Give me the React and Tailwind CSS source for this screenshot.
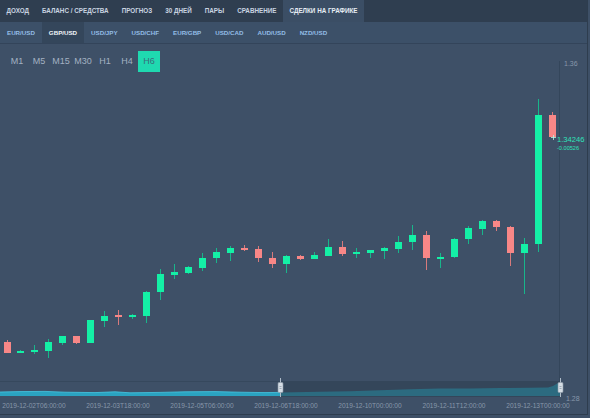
import React from "react";

const tabs = ["ДОХОД", "БАЛАНС / СРЕДСТВА", "ПРОГНОЗ", "30 ДНЕЙ", "ПАРЫ", "СРАВНЕНИЕ", "СДЕЛКИ НА ГРАФИКЕ"];
const pairs = ["EUR/USD", "GBP/USD", "USD/JPY", "USD/CHF", "EUR/GBP", "USD/CAD", "AUD/USD", "NZD/USD"];
const frames = ["M1", "M5", "M15", "M30", "H1", "H4", "H6"];

// [x, bodyTop, bodyBottom, wickTop, wickBottom, up]
const candles = [
  [7, 342, 353, 340, 353, 0],
  [20, 351, 353, 350, 353, 1],
  [34, 350, 352, 345, 354, 1],
  [48, 342, 351, 339, 358, 1],
  [62, 336, 343, 336, 345, 1],
  [76, 336, 343, 336, 344, 0],
  [90, 320, 343, 320, 343, 1],
  [104, 316, 321, 311, 327, 1],
  [118, 315, 317, 310, 325, 0],
  [132, 315, 317, 314, 319, 1],
  [146, 292, 316, 291, 323, 1],
  [160, 274, 292, 269, 300, 1],
  [174, 272, 275, 264, 279, 1],
  [188, 267, 273, 266, 274, 1],
  [202, 258, 268, 253, 271, 1],
  [216, 252, 258, 248, 263, 1],
  [230, 248, 253, 246, 261, 1],
  [244, 248, 250, 245, 251, 0],
  [258, 249, 258, 246, 262, 0],
  [272, 258, 264, 252, 268, 0],
  [286, 256, 264, 255, 273, 1],
  [300, 256, 259, 255, 260, 0],
  [314, 255, 259, 252, 259, 1],
  [328, 247, 256, 239, 256, 1],
  [342, 247, 254, 241, 256, 0],
  [356, 252, 254, 248, 258, 1],
  [370, 250, 253, 250, 258, 1],
  [384, 248, 251, 247, 259, 1],
  [398, 242, 249, 236, 253, 1],
  [412, 235, 242, 225, 250, 1],
  [426, 235, 258, 231, 270, 0],
  [440, 257, 259, 253, 268, 1],
  [454, 239, 257, 238, 258, 1],
  [468, 228, 239, 226, 244, 1],
  [482, 221, 229, 220, 235, 1],
  [496, 221, 227, 220, 231, 0],
  [510, 227, 253, 226, 266, 0],
  [524, 244, 253, 238, 294, 1],
  [538, 115, 244, 99, 252, 1],
  [552, 115, 137, 112, 137, 0],
];

const dates = [
  [34, "2019-12-02T06:00:00"],
  [118, "2019-12-03T18:00:00"],
  [202, "2019-12-05T06:00:00"],
  [286, "2019-12-06T18:00:00"],
  [370, "2019-12-10T00:00:00"],
  [454, "2019-12-11T12:00:00"],
  [538, "2019-12-13T00:00:00"],
];

function Handle({ x }) {
  return (
    <g>
      <line x1={x + 0.5} y1={378} x2={x + 0.5} y2={397} stroke="#aebbc8" strokeWidth="1" />
      <rect x={x - 2} y={382.5} width={5} height={10} rx="1" fill="#d5dde5" stroke="#8d9aa8" strokeWidth="0.6" />
      <line x1={x - 0.5} y1={386.5} x2={x + 1.5} y2={386.5} stroke="#7d8a98" strokeWidth="0.6" />
      <line x1={x - 0.5} y1={388.5} x2={x + 1.5} y2={388.5} stroke="#7d8a98" strokeWidth="0.6" />
    </g>
  );
}

function Chart() {
  return (
    <svg className="block" width="590" height="371" viewBox="0 44 590 371" style={{ fontFamily: '"Liberation Sans", Arial, sans-serif' }}>
      {/* right axis */}
      <line x1="559.5" y1="61" x2="559.5" y2="397" stroke="#34465b" strokeWidth="1" />
      <text x="564" y="66" fontSize="7" fill="#8797aa">1.36</text>
      <text x="566" y="401" fontSize="7" fill="#8797aa">1.28</text>

      {candles.map(([x, bt, bb, wt, wb, up], i) => {
        const body = up ? "#14f0a6" : "#f88787";
        const wick = up ? "#18b58b" : "#d77a7c";
        return (
          <g key={i}>
            <line x1={x + 0.5} y1={wt} x2={x + 0.5} y2={wb} stroke={wick} strokeWidth="1" />
            <rect x={x - 3} y={bt} width={7} height={Math.max(bb - bt, 1.5)} fill={body} />
          </g>
        );
      })}

      {/* last price */}
      <line x1="551" y1="137.5" x2="556" y2="137.5" stroke="#b9f5e4" strokeWidth="0.8" />
      <line x1="553.5" y1="135" x2="553.5" y2="140" stroke="#b9f5e4" strokeWidth="0.8" />
      <text x="557" y="142" fontSize="7.6" fill="#2fe3b9">1.34246</text>
      <text x="557" y="150" fontSize="5.6" fill="#2fe3b9">-0.00526</text>

      {/* navigator */}
      <line x1="0" y1="381.5" x2="560" y2="381.5" stroke="#36485d" strokeWidth="1" />
      <rect x="281" y="381" width="279" height="16" fill="#34465a" />
      <path
        d="M0 392 L20 391.6 L45 391.4 L65 392.2 L95 392.6 L115 391.8 L130 392.8 L160 392.4 L185 391.8 L215 391.6 L240 392.2 L265 392.6 L281 392.4 L281 396 L0 396 Z"
        fill="#2ba3c1"
      />
      <path
        d="M0 392 L20 391.6 L45 391.4 L65 392.2 L95 392.6 L115 391.8 L130 392.8 L160 392.4 L185 391.8 L215 391.6 L240 392.2 L265 392.6 L281 392.4"
        fill="none"
        stroke="#46c6e2"
        strokeWidth="0.8"
      />
      <path
        d="M281 392.4 L320 391.8 L350 391.2 L380 390.2 L410 389.2 L440 388.6 L470 388.4 L500 388 L530 387.8 L548 387.4 L553 386 L558 383 L560 383 L560 396 L281 396 Z"
        fill="#2c6b80"
      />
      <Handle x={280} />
      <Handle x={560} />

      {dates.map(([x, t]) => (
        <text key={t} x={x} y={408} fontSize="6.6" fill="#8797aa" textAnchor="middle">
          {t}
        </text>
      ))}
    </svg>
  );
}

export default function App() {
  return (
    <div className="w-[590px] h-[418px] bg-[#3e5067] overflow-hidden" style={{ fontFamily: '"Liberation Sans", Arial, sans-serif' }}>
      <div className="w-[588px] h-[415px] border-r border-b border-[#2e3d4e] flex flex-col">
        {/* top tabs */}
        <div className="flex h-[22px] bg-[#2f3e50] shrink-0">
          {tabs.map((t, i) => (
            <div
              key={t}
              className={`flex items-center px-[6.5px] text-[6.3px] font-bold uppercase ${
                i === 6 ? "bg-[#3b4e65] text-[#e6edf4]" : "text-[#c9d4e0]"
              }`}
            >
              {t}
            </div>
          ))}
        </div>
        {/* pairs */}
        <div className="flex h-[22px] bg-[#3c5068] border-b border-[#33445a] shrink-0">
          {pairs.map((p, i) => (
            <div
              key={p}
              className={`flex items-center px-[7px] text-[6.2px] font-bold ${
                i === 1 ? "bg-[#34465b] text-[#f1f5f9]" : "text-[#93bde6]"
              }`}
            >
              {p}
            </div>
          ))}
        </div>
        {/* chart */}
        <div className="relative flex-1">
          <Chart />
          <div className="absolute left-[6px] top-[7px] flex">
            {frames.map((f, i) => (
              <div
                key={f}
                className={`w-[22px] h-[21px] flex items-center justify-center text-[9px] ${
                  i === 6 ? "bg-[#1fd9b0] text-[#3b6b7c]" : "text-[#a3b1c2]"
                }`}
              >
                {f}
              </div>
            ))}
          </div>
        </div>
      </div>
    </div>
  );
}
